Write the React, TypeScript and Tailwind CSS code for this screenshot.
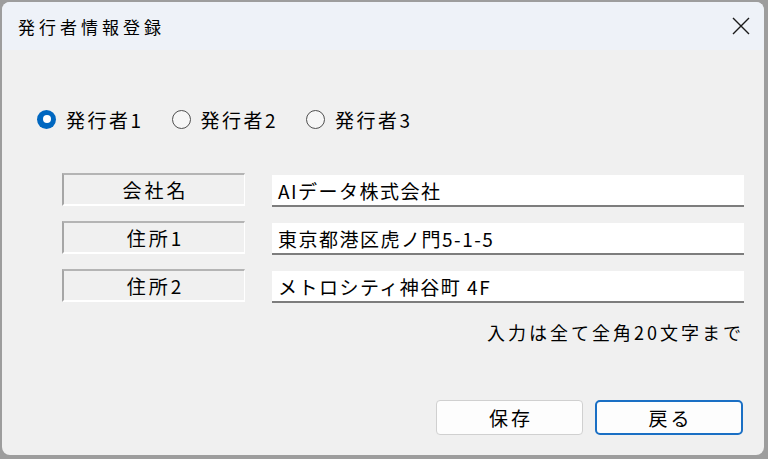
import { useState } from 'react';

const issuers = ['発行者1', '発行者2', '発行者3'];

const fields = [
  { label: '会社名', value: 'AIデータ株式会社' },
  { label: '住所1', value: '東京都港区虎ノ門5-1-5' },
  { label: '住所2', value: 'メトロシティ神谷町 4F' },
];

const font = "font-['Noto_Sans_CJK_JP','Noto_Sans',sans-serif]";

function Radio({ checked, label, onClick }: { checked: boolean; label: string; onClick: () => void }) {
  return (
    <button type="button" onClick={onClick} className="flex h-[20px] items-center gap-[10px]">
      {checked ? (
        <span className="flex h-[19px] w-[19px] items-center justify-center rounded-full bg-[#0067c0]">
          <span className="h-[8px] w-[8px] rounded-full bg-white" />
        </span>
      ) : (
        <span className="h-[19px] w-[19px] rounded-full border border-[#4f4f4f] bg-[#f6f6f6]" />
      )}
      <span className="text-[19px] leading-none tracking-[2.5px] text-black">{label}</span>
    </button>
  );
}

export default function App() {
  const [selected, setSelected] = useState(0);

  return (
    <div className={`h-[459px] w-[768px] bg-[#9d9d9d] pl-[2px] pt-[2px] ${font}`}>
      <div className="flex h-[453px] w-[762px] flex-col overflow-hidden rounded-[8px] bg-[#f0f0f0]">
        {/* title bar */}
        <div className="flex h-[48px] shrink-0 items-center justify-between bg-[#eef2f8] pl-[16px] pr-[13px]">
          <span className="text-[17px] leading-none tracking-[4px] text-black">発行者情報登録</span>
          <svg width="20" height="20" viewBox="0 0 20 20" className="text-[#1a1a1a]">
            <path d="M2 2 L18 18 M18 2 L2 18" stroke="currentColor" strokeWidth="1.4" fill="none" />
          </svg>
        </div>

        <div className="flex flex-1 flex-col pl-[35px] pr-[20px] pt-[59px]">
          {/* issuer radios */}
          <div className="flex items-center gap-[28px]">
            {issuers.map((name, i) => (
              <Radio key={name} label={name} checked={selected === i} onClick={() => setSelected(i)} />
            ))}
          </div>

          {/* fields */}
          <div className="ml-[25px] mt-[44px] flex flex-col gap-[15px]">
            {fields.map((f) => (
              <div key={f.label} className="flex h-[33px] items-center gap-[27px]">
                <div className="flex h-[33px] w-[183px] items-center justify-center border-b-[2px] border-l-[2px] border-r border-t-[2px] border-b-white border-l-[#a6a6a6] border-r-white border-t-[#b4b4b4] pl-[3px] text-[19px] leading-none tracking-[3px] text-black">
                  {f.label}
                </div>
                <div className="mt-[3px] flex h-[32px] w-[472px] items-center border-b-[2px] border-b-[#7d7d7d] bg-white pl-[6px] text-[19px] leading-none tracking-[1.5px] text-black">
                  {f.value}
                </div>
              </div>
            ))}
          </div>

          <div className="mt-[18px] flex h-[24px] items-center justify-end text-[18px] leading-none tracking-[3px] text-black">
            入力は全て全角20文字まで
          </div>

          {/* buttons */}
          <div className="mt-[56px] flex justify-end gap-[12px] pr-[1px]">
            <button
              type="button"
              className="flex h-[35px] w-[147px] items-center justify-center rounded-[4px] border border-[#d0d0d0] bg-[#fdfdfd] pl-[3px] text-[19px] leading-none tracking-[3px] text-black"
            >
              保存
            </button>
            <button
              type="button"
              className="flex h-[35px] w-[148px] items-center justify-center rounded-[5px] border-[2px] border-[#1a6fc4] bg-[#fdfdfd] pl-[3px] text-[19px] leading-none tracking-[3px] text-black"
            >
              戻る
            </button>
          </div>
        </div>
      </div>
    </div>
  );
}
